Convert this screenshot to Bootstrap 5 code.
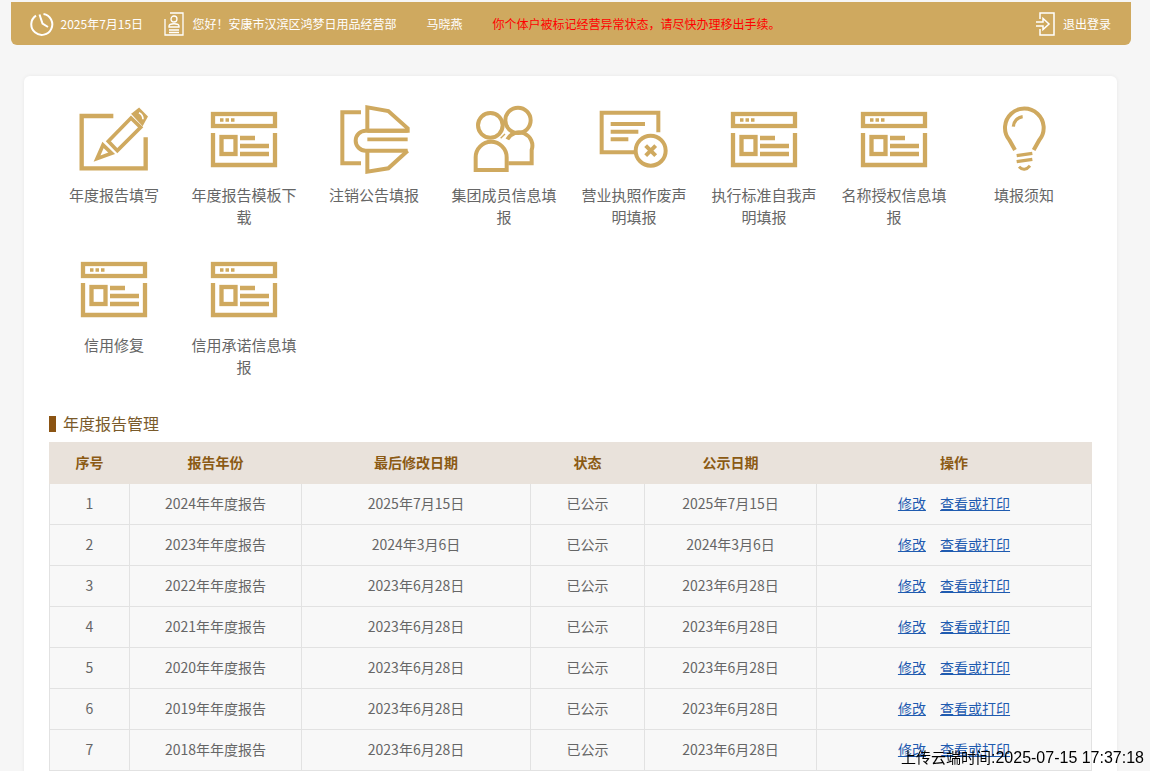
<!DOCTYPE html>
<html lang="zh-CN">
<head>
<meta charset="utf-8">
<title>年度报告</title>
<link rel="stylesheet" href="https://cdn.jsdelivr.net/npm/bootstrap@5.3.0/dist/css/bootstrap.min.css">
<style>
html,body{height:771px;overflow:hidden}
body{background:#f6f6f6;color:#666;font-family:"Noto Sans CJK SC","Liberation Sans",sans-serif;font-size:14px}
.topbar{height:43px;margin:2px 19px 0 11px;padding:0 20px 0 19px;background:#cfa95f;border-radius:0 0 6px 6px;color:#fff;font-size:12px}
.topbar svg{display:block;fill:none;stroke:#fff}
.tb-date{margin-left:6.500px;width:103px}
.tb-hello{margin-left:9px;width:234px}
.tb-name{width:66px}
.tb-warn{color:#f00}
.tb-out{margin-left:auto}
.sheet{margin:31px 33px 0 24px;padding:27px 25px 40px;border:0;border-radius:6px;box-shadow:0 0 4px rgba(0,0,0,.06)}
.tile-grid{width:1040px}
.tile{width:130px;height:150px;padding:0 10px;text-align:center;font-size:15px;line-height:22px;color:#666;text-decoration:none}
.tile svg{display:block;width:130px;height:75px;margin:0 -10px 6px;fill:none;stroke:#cfa95f;stroke-width:12}
.win svg{stroke-width:4.300}
.sect-wrap{height:16px;margin:13px 0 10px;display:flex;align-items:center}
.sect-title{height:16px;margin:0;padding-left:7px;font-size:16px;line-height:15px;color:#7a5a2a;font-weight:400;border-left:7px solid #8b5413}
.report{width:1043px;table-layout:fixed;margin:0;--bs-table-bg:#f8f8f8;--bs-table-color:#666;--bs-table-border-color:#e2e2e2}
.report th{height:41.500px;padding:0;background:#e9e2db;color:#8b5a14;font-size:14px;font-weight:700;text-align:center;vertical-align:middle;border-width:0 1px;border-style:solid;border-color:#e9e2db}
.report td{height:41px;padding:0 0 1px;text-align:center;vertical-align:middle;font-size:14px;border:1px solid #e2e2e2;border-top:0}
.report a{color:#1f5bb0;margin:0 5.500px}
.stamp{right:6px;bottom:3px;color:#000;font-size:16px;line-height:20px;font-family:"Liberation Sans","Noto Sans CJK SC",sans-serif}
.stamp-cjk{font-size:15px}
</style>
</head>
<body>
<svg width="0" height="0" class="d-block position-absolute">
  <symbol id="winicon" viewBox="0 0 130 75">
    <g transform="translate(32 9)">
      <rect x="2" y="2" width="62" height="12"/>
      <path d="M2 21V53H64V21"/>
      <rect x="10.500" y="25" width="14" height="17"/>
      <path d="M29 26H44M29 34H58M29 42H58"/>
      <path d="M9 8h3.500M14.500 8h3.500M20 8h3.500" stroke-width="3.500"/>
    </g>
  </symbol>
</svg>

<div class="topbar d-flex align-items-center">
  <svg width="24" height="26" viewBox="0 0 24 26" stroke-width="2"><path d="M13.500 3A10.500 10.500 0 1 1 6 4.600"/><path d="M9.500 3.500L12.500 12.500L18 16"/></svg>
  <span class="tb-date">2025年7月15日</span>
  <svg width="20" height="24" viewBox="0 0 20 24" stroke-width="1.300"><path d="M1 7V23H19V1H6"/><circle cx="10" cy="7" r="3"/><path d="M5 14c0-3 10-3 10 0v1H5zM5 18H15M5 20.500H15"/></svg>
  <span class="tb-hello">您好！安康市汉滨区鸿梦日用品经营部</span>
  <span class="tb-name">马晓燕</span>
  <span class="tb-warn">你个体户被标记经营异常状态，请尽快办理移出手续。</span>
  <span class="tb-out d-flex align-items-center gap-2">
    <svg width="19" height="24" viewBox="0 0 19 24" stroke-width="1.500"><path d="M4 7V1H18V23H4V17"/><path d="M0 10H7V6.500L13 12L7 17.500V14H0"/></svg>
    <span>退出登录</span>
  </span>
</div>

<div class="card sheet">
  <div class="tile-grid d-flex flex-wrap">
    <a class="tile" href="#">
      <svg viewBox="-78 9 390 225"><path d="M115 48H20V205H212V112" stroke-width="13"/><path d="M100 124L168 54L197 82L127 152Z" stroke-width="11"/><path d="M84 135L66 176L110 160Z" stroke-width="11"/><path d="M174 42L192 28L214 50L202 72Z" fill="#cfa95f" stroke-width="8"/><path d="M192 38Q204 44 204 58" stroke="#fff" stroke-width="5"/></svg>
      年度报告填写
    </a>
    <a class="tile win" href="#"><svg><use href="#winicon"/></svg>年度报告模板下载</a>
    <a class="tile" href="#">
      <svg viewBox="-78 9 390 225" stroke-width="9"><path d="M78 37H22V190H78" stroke-width="12"/><path d="M97 88V22L160 33L218 85V92H97"/><path d="M218 92H92A30 30 0 0 0 92 152H218"/><path d="M97 118H218" stroke-width="11"/><path d="M97 152V215L160 205L218 152"/></svg>
      注销公告填报
    </a>
    <a class="tile" href="#">
      <svg viewBox="-93 9 390 225" stroke-width="11"><circle cx="144" cy="61" r="38"/><circle cx="61" cy="76" r="37"/><path d="M17 210V172A46.500 46.500 0 0 1 110 172V210Z"/><path d="M112 118A40 40 0 0 1 185 150V190H115"/><path d="M92 115L105 102" stroke-width="4"/></svg>
      集团成员信息填报
    </a>
    <a class="tile" href="#">
      <svg viewBox="387 24 390 225" stroke-width="12"><path d="M655 112V53H485V172H582"/><path d="M512 87H615M512 110H595M512 133H565"/><circle cx="632" cy="167" r="45"/><path d="M617 152L647 182M647 152L617 182"/></svg>
      营业执照作废声明填报
    </a>
    <a class="tile win" href="#"><svg><use href="#winicon"/></svg>执行标准自我声明填报</a>
    <a class="tile win" href="#"><svg><use href="#winicon"/></svg>名称授权信息填报</a>
    <a class="tile" href="#">
      <svg viewBox="477 24 390 225" stroke-width="11"><path d="M645 165L628 135A58 58 0 1 1 718 135L701 165"/><path d="M640 95A32 32 0 0 1 668 65M650 182L697 175M650 200L697 193" stroke-width="10"/><path d="M657 215Q673 232 690 212" stroke-width="9"/></svg>
      填报须知
    </a>
    <a class="tile win" href="#"><svg><use href="#winicon"/></svg>信用修复</a>
    <a class="tile win" href="#"><svg><use href="#winicon"/></svg>信用承诺信息填报</a>
  </div>

  <div class="sect-wrap"><h2 class="sect-title">年度报告管理</h2></div>

  <table class="table report">
    <colgroup><col style="width:80px"><col style="width:172px"><col style="width:229px"><col style="width:114px"><col style="width:172px"><col style="width:275px"></colgroup>
    <thead><tr><th>序号</th><th>报告年份</th><th>最后修改日期</th><th>状态</th><th>公示日期</th><th>操作</th></tr></thead>
    <tbody>
      <tr><td>1</td><td>2024年年度报告</td><td>2025年7月15日</td><td>已公示</td><td>2025年7月15日</td><td><a href="#">修改</a> <a href="#">查看或打印</a></td></tr>
      <tr><td>2</td><td>2023年年度报告</td><td>2024年3月6日</td><td>已公示</td><td>2024年3月6日</td><td><a href="#">修改</a> <a href="#">查看或打印</a></td></tr>
      <tr><td>3</td><td>2022年年度报告</td><td>2023年6月28日</td><td>已公示</td><td>2023年6月28日</td><td><a href="#">修改</a> <a href="#">查看或打印</a></td></tr>
      <tr><td>4</td><td>2021年年度报告</td><td>2023年6月28日</td><td>已公示</td><td>2023年6月28日</td><td><a href="#">修改</a> <a href="#">查看或打印</a></td></tr>
      <tr><td>5</td><td>2020年年度报告</td><td>2023年6月28日</td><td>已公示</td><td>2023年6月28日</td><td><a href="#">修改</a> <a href="#">查看或打印</a></td></tr>
      <tr><td>6</td><td>2019年年度报告</td><td>2023年6月28日</td><td>已公示</td><td>2023年6月28日</td><td><a href="#">修改</a> <a href="#">查看或打印</a></td></tr>
      <tr><td>7</td><td>2018年年度报告</td><td>2023年6月28日</td><td>已公示</td><td>2023年6月28日</td><td><a href="#">修改</a> <a href="#">查看或打印</a></td></tr>
    </tbody>
  </table>
</div>

<div class="stamp position-fixed"><span class="stamp-cjk">上传云端时间</span>:2025-07-15 17:37:18</div>
<script src="https://cdn.jsdelivr.net/npm/bootstrap@5.3.0/dist/js/bootstrap.bundle.min.js"></script>
</body>
</html>
